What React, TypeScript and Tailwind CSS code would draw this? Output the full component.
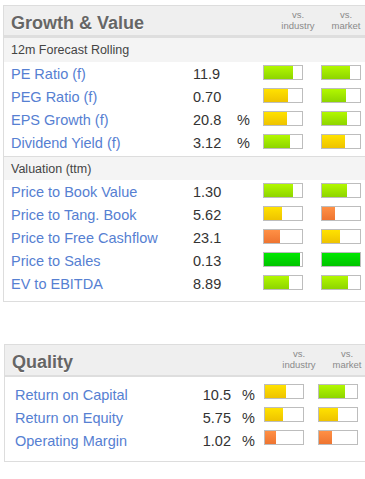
import React from 'react';

type Tone = 'lime' | 'green' | 'yellow' | 'orange';

interface Row {
  label: string;
  value: string;
  unit?: string;
  industry: [Tone, number];
  market: [Tone, number];
}

const toneClass: Record<Tone, string> = {
  lime: 'bg-linear-to-b from-[#b2f800] to-[#8ed500]',
  green: 'bg-linear-to-b from-[#00e800] to-[#00c400]',
  yellow: 'bg-linear-to-b from-[#ffe200] to-[#eec300]',
  orange: 'bg-linear-to-b from-[#ff9045] to-[#ee7430]',
};

const forecast: Row[] = [
  { label: 'PE Ratio (f)', value: '11.9', industry: ['lime', 29], market: ['lime', 28] },
  { label: 'PEG Ratio (f)', value: '0.70', industry: ['yellow', 24], market: ['lime', 24] },
  { label: 'EPS Growth (f)', value: '20.8', unit: '%', industry: ['yellow', 23], market: ['lime', 25] },
  { label: 'Dividend Yield (f)', value: '3.12', unit: '%', industry: ['lime', 26], market: ['yellow', 23] },
];

const valuation: Row[] = [
  { label: 'Price to Book Value', value: '1.30', industry: ['lime', 29], market: ['lime', 25] },
  { label: 'Price to Tang. Book', value: '5.62', industry: ['yellow', 18], market: ['orange', 13] },
  { label: 'Price to Free Cashflow', value: '23.1', industry: ['orange', 16], market: ['yellow', 18] },
  { label: 'Price to Sales', value: '0.13', industry: ['green', 36], market: ['green', 38] },
  { label: 'EV to EBITDA', value: '8.89', industry: ['lime', 25], market: ['lime', 26] },
];

const quality: Row[] = [
  { label: 'Return on Capital', value: '10.5', industry: ['yellow', 21], market: ['lime', 26] },
  { label: 'Return on Equity', value: '5.75', industry: ['yellow', 18], market: ['yellow', 19] },
  { label: 'Operating Margin', value: '1.02', industry: ['orange', 11], market: ['orange', 13] },
];

function Bar({ tone }: { tone: [Tone, number] }) {
  return (
    <div className="w-[40px] h-[15px] border border-[#bdbdbd] bg-white flex-shrink-0">
      <div className={`h-full ${toneClass[tone[0]]}`} style={{ width: tone[1] }} />
    </div>
  );
}

function SectionHeader({ title, className }: { title: string; className: string }) {
  return (
    <div className={`flex bg-[#efefef] ${className}`}>
      <div className="flex-1 pl-[7px] pt-[8px] text-[18px] leading-[18px] font-bold text-[#666] [text-shadow:0_1px_0_#fff]">
        {title}
      </div>
      {/* comparison column captions */}
      <div className="w-[48px] pt-[4px] text-center text-[9.5px] leading-[10.5px] text-[#8a8a8a]">
        vs.
        <br />
        industry
      </div>
      <div className="w-[48px] pt-[4px] text-center text-[9.5px] leading-[10.5px] text-[#8a8a8a]">
        vs.
        <br />
        market
      </div>
      <div className="w-[12px]" />
    </div>
  );
}

function RatioRow({ row }: { row: Row }) {
  return (
    <div className="flex h-[23px] items-start">
      <div className="w-[189px] pl-[7px] text-[14.5px] leading-[25px] text-[#5680d2] whitespace-nowrap">{row.label}</div>
      <div className="w-[44px] text-[14.5px] leading-[25px] text-[#333]">{row.value}</div>
      <div className="w-[26px] text-[14.5px] leading-[25px] text-[#333]">{row.unit ?? ''}</div>
      <div className="flex mt-[3px] gap-[18px]">
        <Bar tone={row.industry} />
        <Bar tone={row.market} />
      </div>
    </div>
  );
}

function QualityRow({ row }: { row: Row }) {
  return (
    <div className="flex h-[23px] items-start">
      <div className="w-[186px] pl-[10px] text-[14.5px] leading-[25px] text-[#5680d2] whitespace-nowrap">{row.label}</div>
      <div className="w-[40px] text-right text-[14.5px] leading-[25px] text-[#333]">{row.value}</div>
      <div className="w-[33px] pl-[11px] text-[14.5px] leading-[25px] text-[#333]">%</div>
      <div className="flex mt-[1px] gap-[14px]">
        <Bar tone={row.industry} />
        <Bar tone={row.market} />
      </div>
    </div>
  );
}

function SubHeader({ children, border }: { children: React.ReactNode; border?: boolean }) {
  return (
    <div
      className={`h-[24px] bg-[#f4f4f4] pl-[7px] text-[12.5px] leading-[25px] text-[#444] ${
        border ? 'border-t border-[#dddddd]' : ''
      }`}
    >
      {children}
    </div>
  );
}

export default function App() {
  return (
    <div className="w-[365px] h-[479px] overflow-hidden bg-white font-['Liberation_Sans',Arial,sans-serif]">
      {/* Growth & Value */}
      <div className="mt-[5px] ml-[3px] w-[380px] border border-[#dddddd]">
        <SectionHeader title="Growth & Value" className="h-[29px]" />
        <div className="h-[3px] bg-[#dedede]" />
        <SubHeader>12m Forecast Rolling</SubHeader>
        <div className="pb-[2px]">
          {forecast.map((r) => (
            <RatioRow key={r.label} row={r} />
          ))}
        </div>
        <SubHeader border>Valuation (ttm)</SubHeader>
        <div className="pb-[6px]">
          {valuation.map((r) => (
            <RatioRow key={r.label} row={r} />
          ))}
        </div>
      </div>

      {/* Quality */}
      <div className="mt-[42px] ml-[4px] w-[380px] border border-[#dddddd]">
        <SectionHeader title="Quality" className="h-[30px]" />
        <div className="h-[2px] bg-[#dedede]" />
        <div className="pt-[6px] pb-[9px]">
          {quality.map((r) => (
            <QualityRow key={r.label} row={r} />
          ))}
        </div>
      </div>
    </div>
  );
}
